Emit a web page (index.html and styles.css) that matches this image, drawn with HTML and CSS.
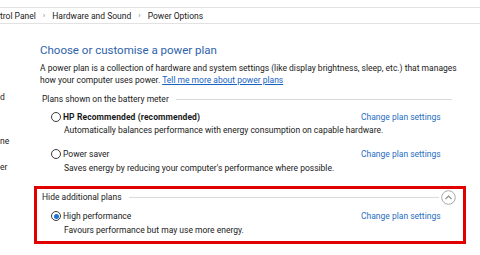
FILE: index.html
```html
<!DOCTYPE html>
<html>
<head>
<meta charset="utf-8">
<link rel="stylesheet" href="styles.css">
</head>
<body>
<div class="addr">
  <span>trol Panel</span><span class="sep">›</span><span>Hardware and Sound</span><span class="sep">›</span><span>Power Options</span>
</div>
<div class="page">
  <div class="side">
    <div class="s1">d</div>
    <div class="s2">ne</div>
    <div class="s3">er</div>
  </div>
  <div class="main">
    <h1 class="title">Choose or customise a power plan</h1>
    <p class="intro">A power plan is a collection of hardware and system settings (like display brightness, sleep, etc.) that manages<br>how your computer uses power. <a class="link" href="#">Tell me more about power plans</a></p>
    <div class="group">
      <div class="ghead"><span>Plans shown on the battery meter</span><div class="rule"></div></div>
      <div class="plan p1">
        <div class="prow"><span class="radio"></span><span class="pname bold">HP Recommended (recommended)</span><a class="change" href="#">Change plan settings</a></div>
        <div class="pdesc">Automatically balances performance with energy consumption on capable hardware.</div>
      </div>
      <div class="plan p2">
        <div class="prow"><span class="radio"></span><span class="pname">Power saver</span><a class="change" href="#">Change plan settings</a></div>
        <div class="pdesc">Saves energy by reducing your computer's performance where possible.</div>
      </div>
    </div>
    <div class="hl">
      <div class="ghead"><span>Hide additional plans</span><div class="rule"></div>
        <span class="toggle"><svg width="15" height="15" viewBox="0 0 15 15"><circle cx="7.5" cy="7.5" r="6.8" fill="none" stroke="#a8a8a8" stroke-width="1"/><path d="M4.5 9 L7.5 6 L10.5 9" fill="none" stroke="#8a8a8a" stroke-width="1.1"/></svg></span>
      </div>
      <div class="plan p3">
        <div class="prow"><span class="radio on"></span><span class="pname">High performance</span><a class="change" href="#">Change plan settings</a></div>
        <div class="pdesc">Favours performance but may use more energy.</div>
      </div>
    </div>
  </div>
</div>
</body>
</html>
```

FILE: styles.css
```css
* { box-sizing: border-box; }
html, body { margin: 0; padding: 0; background: #fff; }
body {
  font-family: Roboto, "Noto Sans", sans-serif;
  font-size: 8.5px;
  color: #1a1a1a;
  width: 480px;
  height: 255px;
  overflow: hidden;
}
.addr {
  margin-top: 7px;
  height: 17px;
  border-top: 1px solid #e2e2e2;
  border-bottom: 1px solid #e2e2e2;
  display: flex;
  align-items: center;
  font-size: 8.5px;
  color: #1a1a1a;
  white-space: nowrap;
}
.addr .sep { color: #808080; margin: 0 7px; font-size: 8px; }
.page { display: flex; }
.side { width: 40px; flex: none; line-height: 12px; }
.side .s1 { margin-top: 67px; }
.side .s2 { margin-top: 32px; }
.side .s3 { margin-top: 14px; }
.main { flex: none; width: 430px; }
.title {
  margin: 18px 0 0 0;
  font-weight: normal;
  font-size: 11.5px;
  color: #2d62ab;
  line-height: 16px;
}
.intro { margin: 4px 0 0 0; line-height: 12px; white-space: nowrap; }
.link { color: #1763c2; text-decoration: underline; }
.group { margin-top: 7px; margin-left: 2px; width: 410px; }
.ghead { display: flex; align-items: center; gap: 7px; height: 12px; white-space: nowrap; }
.rule { flex: 1; border-top: 1px solid #dadada; }
.prow { display: flex; align-items: center; height: 12px; padding-left: 9px; white-space: nowrap; }
.radio {
  width: 10px; height: 10px; border: 1px solid #3a3a3a; border-radius: 50%;
  margin-right: 2px; flex: none; position: relative;
}
.radio.on::after {
  content: ""; position: absolute; left: 1.5px; top: 1.5px; width: 5px; height: 5px;
  border-radius: 50%; background: #1a74d4;
}
.pname { width: 298px; flex: none; }
.bold { font-weight: bold; letter-spacing: 0.1px; }
.change { color: #2a6ec0; text-decoration: none; }
.pdesc { padding-left: 22px; line-height: 12px; white-space: nowrap; }
.p1 { margin-top: 6px; }
.p1 .pdesc { margin-top: 1px; }
.p2 { margin-top: 12px; }
.p2 .pdesc { margin-top: 2px; }
.hl {
  margin: 12px 0 0 -6px;
  width: 432px;
  border: 3px solid #e10000;
  padding: 2px 7px 5px 5px;
}
.hl .ghead { gap: 0; }
.hl .ghead span:first-child { margin-right: 7px; }
.toggle { display: flex; margin-left: 2px; }
.p3 { margin-top: 7px; }
.p3 .pdesc { margin-top: 2px; }
```
